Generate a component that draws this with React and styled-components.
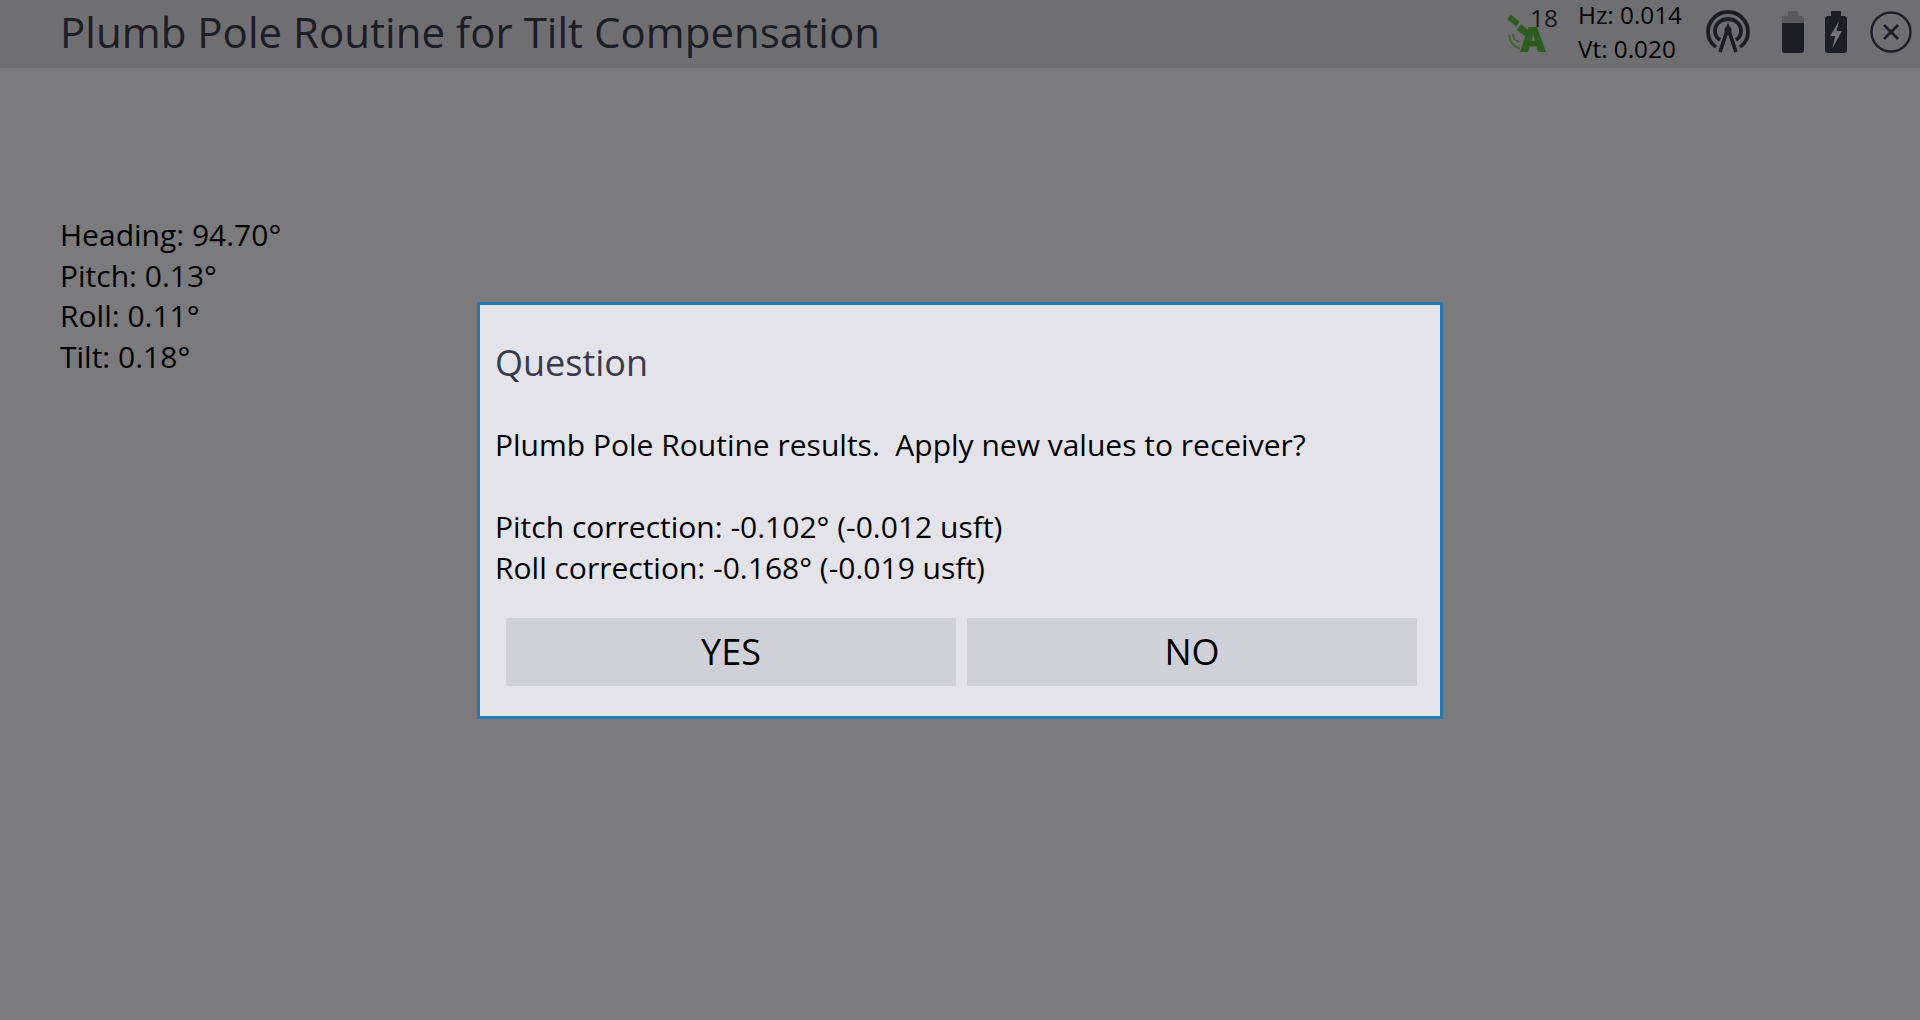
import React from "react";
import styled, { createGlobalStyle } from "styled-components";

const Global = createGlobalStyle`
  html, body { margin: 0; padding: 0; height: 100%; }
  body { font-family: "Open Sans", "Liberation Sans", sans-serif; background: #f6f6fa; overflow: hidden; }
`;
const Page = styled.div`width: 1920px; height: 1020px; display: flex; flex-direction: column; color: #000;`;
const Header = styled.header`
  height: 68px; background: #dedee2; display: flex; align-items: center; padding: 0 8px 0 60px; box-sizing: border-box; flex: none;
`;
const Title = styled.h1`margin: -4px 0 0; flex: 1; font-size: 42px; letter-spacing: 0.03px; font-weight: 400; color: #3a3a4c; line-height: 62px; white-space: nowrap;`;
const Status = styled.div`display: flex; align-items: center; height: 68px;`;
const Sat = styled.div`position: relative; width: 71px; height: 68px;`;
const SatGlyph = styled.svg`display: block; margin-top: 10px;`;
const SatCount = styled.span`position: absolute; left: 23px; top: 2px; font-size: 24.3px; line-height: 32px; color: #2a2a40;`;
const Accuracy = styled.div`display: flex; flex-direction: column; font-size: 24.3px; line-height: 34px; color: #000; width: 128px; margin-top: -5px;`;
const IconSlot = styled.div`display: flex; align-items: center; justify-content: center; align-self: flex-start; width: ${p => p.$w}px; height: 64px; margin-left: ${p => p.$ml || 0}px;`;
const Content = styled.main`padding: 147px 60px 0; font-size: 30px; line-height: 40.5px; color: #000;`;
const Overlay = styled.div`position: fixed; inset: 0; background: rgba(0,0,0,.5); display: flex; align-items: center; justify-content: center;`;
const Dialog = styled.section`
  width: 966px; height: 417px; box-sizing: border-box; background: #e3e3e9; border: 3px solid #2878ae; padding: 33px 15px 0; display: flex; flex-direction: column;
`;
const DTitle = styled.h2`margin: 0; font-size: 36px; font-weight: 400; line-height: 50px; color: #3a3a4c;`;
const Message = styled.p`margin: 36px 0 0; font-size: 30px; line-height: 41px; color: #000; white-space: pre-wrap;`;
const Actions = styled.div`display: flex; gap: 11px; margin: 30px 0 0 11px;`;
const Btn = styled.button`
  width: 450px; height: 68px; border: 0; background: #d0d0d8; font-family: inherit; font-size: 36px; color: #000; padding: 0;
`;

const SatIcon = () => (
  <SatGlyph width="42" height="44" viewBox="0 0 42 44" fill="none">
    <g stroke="#5cb840">
      <path d="M2 7l9 7" strokeWidth="6" />
      <path d="M12 17l8 6.5" strokeWidth="7" />
      <path d="M6 24c0 4 3 7 7 8" strokeWidth="1.8" opacity=".7" />
      <path d="M2 25c1 7 5 12 11 13" strokeWidth="1.8" opacity=".7" />
    </g>
    <path d="M13 42l8.500-25h8.500l9 25h-8l-1.500-5.500h-7L21 42zM24.500 31h3.500L26.200 24.500z" fill="#5cb840" fillRule="evenodd" />
  </SatGlyph>
);
const RadioIcon = () => (
  <svg width="44" height="44" viewBox="0 0 44 44" fill="none" stroke="#3a3a4c" strokeWidth="3.8">
    <path d="M10 37C4 33 2 27 2 22 2 11 11 2 22 2s20 9 20 20c0 5-2 11-8 15" />
    <path d="M14 30c-3-2-5-5-5-9 0-7 6-12 13-12s13 5 13 12c0 4-2 7-5 9" />
    <path d="M14 42l8-24 8 24" strokeWidth="3.8" />
    <circle cx="22" cy="20" r="3.6" fill="#3a3a4c" stroke="none" />
  </svg>
);
const BatteryIcon = () => (
  <svg width="22" height="42" viewBox="0 0 22 42">
    <path d="M6 0h10v5h3a3 3 0 0 1 3 3v4H0V8a3 3 0 0 1 3-3h3z" fill="#b4b4b8" />
    <path d="M0 12h22v27a3 3 0 0 1-3 3H3a3 3 0 0 1-3-3z" fill="#3a3a4c" />
  </svg>
);
const ChargeIcon = () => (
  <svg width="22" height="42" viewBox="0 0 22 42">
    <path d="M6 0h10v5h3a3 3 0 0 1 3 3v31a3 3 0 0 1-3 3H3a3 3 0 0 1-3-3V8a3 3 0 0 1 3-3h3z" fill="#3a3a4c" />
    <path d="M14 10L5 25h5l-2.500 12L17 20h-5.500z" fill="#e8e8ec" />
  </svg>
);
const CloseIcon = () => (
  <svg width="42" height="42" viewBox="0 0 42 42" fill="none" stroke="#3a3a4c">
    <circle cx="21" cy="21" r="19.500" strokeWidth="2.4" />
    <path d="M14 14l14 14M28 14L14 28" strokeWidth="2.800" />
  </svg>
);

export default function App() {
  return (
    <>
      <Global />
      <Page>
        <Header>
          <Title>Plumb Pole Routine for Tilt Compensation</Title>
          <Status>
            <Sat>
              <SatIcon />
              <SatCount>18</SatCount>
            </Sat>
            <Accuracy>
              <span>Hz: 0.014</span>
              <span>Vt: 0.020</span>
            </Accuracy>
            <IconSlot $w={44}><RadioIcon /></IconSlot>
            <IconSlot $w={22} $ml={32}><BatteryIcon /></IconSlot>
            <IconSlot $w={22} $ml={21}><ChargeIcon /></IconSlot>
            <IconSlot $w={42} $ml={23}><CloseIcon /></IconSlot>
          </Status>
        </Header>
        <Content>
          <div>Heading: 94.70°</div>
          <div>Pitch: 0.13°</div>
          <div>Roll: 0.11°</div>
          <div>Tilt: 0.18°</div>
        </Content>
      </Page>
      <Overlay>
        <Dialog>
          <DTitle>Question</DTitle>
          <Message>{"Plumb Pole Routine results.  Apply new values to receiver?\n\nPitch correction: -0.102° (-0.012 usft)\nRoll correction: -0.168° (-0.019 usft)"}</Message>
          <Actions>
            <Btn>YES</Btn>
            <Btn>NO</Btn>
          </Actions>
        </Dialog>
      </Overlay>
    </>
  );
}
